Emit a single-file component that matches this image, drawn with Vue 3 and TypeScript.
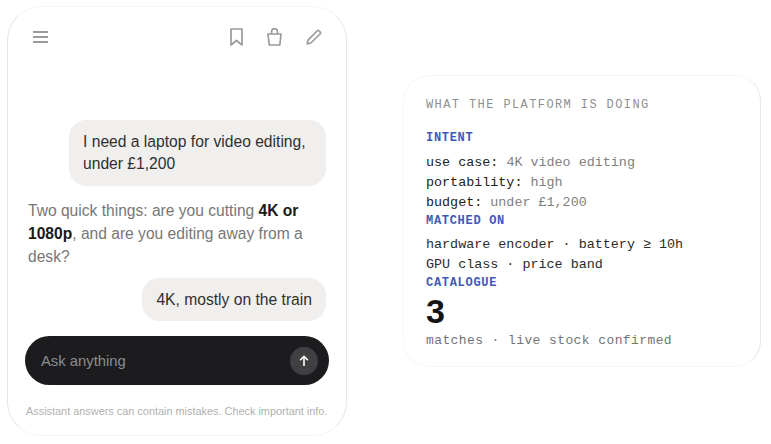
<template>
  <div class="page">
    <!-- chat phone -->
    <section class="phone">
      <header class="topbar">
        <svg class="icon menu" width="15" height="12" viewBox="0 0 15 12">
          <path d="M0 1h15M0 6h15M0 11h15" />
        </svg>
        <div class="actions">
          <svg class="icon" width="13" height="18" viewBox="0 0 13 18">
            <path d="M1 1h11v16l-5.5-4.5L1 17z" />
          </svg>
          <svg class="icon" width="15" height="18" viewBox="0 0 15 18">
            <path d="M1 6h13l-1.2 11H2.2zM4.6 6V3.5a2.9 2.9 0 0 1 5.8 0V6" />
          </svg>
          <svg class="icon" width="16" height="16" viewBox="0 0 16 16">
            <path d="M1.2 14.8l.8-3.6L11 2a1.6 1.6 0 0 1 2.2 0l.8.8a1.6 1.6 0 0 1 0 2.2L4.8 14z" />
          </svg>
        </div>
      </header>

      <div class="messages">
        <p class="bubble first">I need a laptop for video editing, under £1,200</p>
        <p class="reply">
          Two quick things: are you cutting <strong>4K or 1080p</strong>, and are you editing away from a desk?
        </p>
        <p class="bubble second">4K, mostly on the train</p>
      </div>

      <div class="composer">
        <span class="placeholder">Ask anything</span>
        <button class="send" type="button" aria-label="Send">
          <svg width="12" height="12" viewBox="0 0 12 12">
            <path d="M6 11V1.5M2.2 5.2L6 1.5l3.8 3.7" />
          </svg>
        </button>
      </div>

      <p class="note">Assistant answers can contain mistakes. Check important info.</p>
    </section>

    <!-- platform panel -->
    <section class="panel">
      <h2 class="title">WHAT THE PLATFORM IS DOING</h2>

      <h3 class="label intent">INTENT</h3>
      <p v-for="row in intent" :key="row.key" class="line">
        <span class="key">{{ row.key }}:</span> <span class="val">{{ row.val }}</span>
      </p>

      <h3 class="label matched">MATCHED ON</h3>
      <p v-for="row in matched" :key="row" class="line">{{ row }}</p>

      <h3 class="label catalogue">CATALOGUE</h3>
      <div class="count">3</div>
      <p class="foot">matches · live stock confirmed</p>
    </section>
  </div>
</template>

<script setup lang="ts">
const intent = [
  { key: 'use case', val: '4K video editing' },
  { key: 'portability', val: 'high' },
  { key: 'budget', val: 'under £1,200' }
]

const matched = ['hardware encoder · battery ≥ 10h', 'GPU class · price band']
</script>

<style>
html,
body {
  margin: 0;
  background: #fff;
}
</style>

<style scoped>
.page {
  width: 771px;
  height: 444px;
  box-sizing: border-box;
  padding: 0 10px 2px 7px;
  display: flex;
  align-items: center;
  gap: 56px;
  overflow: hidden;
  font-family: "Liberation Sans", Arial, sans-serif;
}

p,
h2,
h3 {
  margin: 0;
}

/* phone */
.phone {
  width: 340px;
  height: 430px;
  box-sizing: border-box;
  padding: 21px 17px 0;
  flex: none;
  background: #fff;
  border: 1px solid #e6e6e6;
  border-top-color: #f5f5f5;
  border-bottom-color: #f5f5f5;
  border-radius: 34px;
  display: flex;
  flex-direction: column;
}

.topbar {
  display: flex;
  align-items: center;
  justify-content: space-between;
  height: 18px;
  padding: 0 7px 0 8px;
}

.actions {
  display: flex;
  align-items: center;
  gap: 24px;
}

.icon {
  display: block;
  fill: none;
  stroke: #9b9b9b;
  stroke-width: 1.7;
  stroke-linejoin: round;
}

.menu {
  stroke-width: 2;
}

.messages {
  margin-top: 74px;
  display: flex;
  flex-direction: column;
  align-items: flex-end;
  padding-right: 3px;
}

.bubble {
  box-sizing: border-box;
  background: #f0efee;
  color: #2f2f2f;
  font-size: 15.65px;
  line-height: 22px;
  border-radius: 17px;
}

.bubble.first {
  width: 257px;
  padding: 11px 14px;
}

.bubble.second {
  padding: 11px 14px 10px;
}

.reply {
  align-self: stretch;
  margin: 13px 0 10px 3px;
  color: #777;
  font-size: 15.6px;
  line-height: 23px;
}

.reply strong {
  color: #1a1a1a;
}

.composer {
  margin-top: 15px;
  height: 49px;
  box-sizing: border-box;
  padding: 0 11px 0 16px;
  border-radius: 25px;
  background: #1c1c1e;
  display: flex;
  align-items: center;
  justify-content: space-between;
}

.placeholder {
  color: #8c8c8e;
  font-size: 14.8px;
}

.send {
  width: 28px;
  height: 28px;
  padding: 0;
  border: none;
  border-radius: 50%;
  background: #404042;
  display: flex;
  align-items: center;
  justify-content: center;
}

.send svg {
  fill: none;
  stroke: #f2f2f2;
  stroke-width: 1.7;
}

.note {
  margin: 20px 0 0 1px;
  color: #b0b0b0;
  font-size: 10.9px;
  line-height: 13px;
  white-space: nowrap;
}

/* panel */
.panel {
  width: 358px;
  height: 292px;
  box-sizing: border-box;
  padding: 23px 22px 0;
  flex: none;
  background: #fff;
  border: 1px solid #e8e8e8;
  border-top-color: #f6f6f6;
  border-bottom-color: #f6f6f6;
  border-left-color: #f6f6f6;
  border-radius: 26px;
  font-family: "Liberation Mono", "DejaVu Sans Mono", monospace;
}

.title {
  color: #8f8f8f;
  font-size: 12px;
  font-weight: 400;
  letter-spacing: 1.4px;
  line-height: 13px;
}

.label {
  color: #3f58b8;
  font-size: 12px;
  font-weight: 700;
  letter-spacing: 0.7px;
  line-height: 14px;
}

.label.intent {
  margin-top: 19px;
  margin-bottom: 8px;
}

.label.matched {
  margin-top: 1px;
  margin-bottom: 7px;
}

.label.catalogue {
  margin-top: 1px;
}

.line {
  font-size: 13.4px;
  line-height: 20px;
  color: #2b2b2b;
  white-space: pre;
}

.key {
  color: #222;
}

.val {
  color: #808080;
}

.count {
  margin-top: 2px;
  color: #141414;
  font-family: "Liberation Sans", Arial, sans-serif;
  font-size: 34px;
  font-weight: 700;
  line-height: 38px;
}

.foot {
  margin-top: 3px;
  color: #737373;
  font-size: 13px;
  letter-spacing: 0.4px;
  line-height: 16px;
}
</style>
